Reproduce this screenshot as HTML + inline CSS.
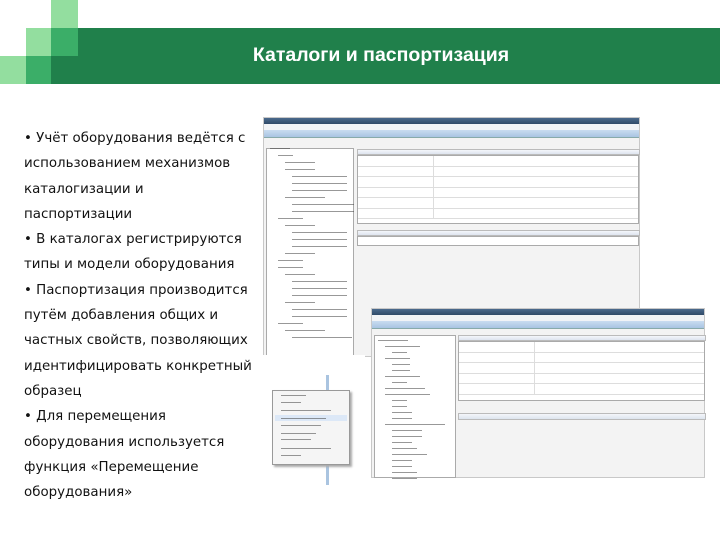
<!DOCTYPE html>
<html><head><meta charset="utf-8">
<style>
*{margin:0;padding:0;box-sizing:border-box}
body{width:720px;height:540px;background:#fff;position:relative;overflow:hidden;font-family:"Liberation Sans",sans-serif}
.a{position:absolute}
.txt{left:24px;top:126px;line-height:25.3px;color:#111;font-family:"DejaVu Sans","Liberation Sans",sans-serif;font-size:13.4px}
.win{background:#f3f3f3;border:1px solid #c8c8c8}
.tb{background:linear-gradient(#4b6a8c,#2f4a68)}
.menu{background:#f1f3f6;font-size:4px;color:#333}
.tabs{background:linear-gradient(#c9dcf0,#a9c4e2);border-bottom:1px solid #8aa}
.tree{background:#fff;border:1px solid #aaa}
.ln{position:absolute;height:1px;background:#444;opacity:.55}
.grid{background:#fff;border:1px solid #aaa}
.row{border-bottom:1px solid #ddd;height:10.5px;position:relative}
.row:before{content:"";position:absolute;left:75px;top:0;bottom:0;border-left:1px solid #ddd}
.hdr{background:linear-gradient(#f4f6fa,#dde4ee);border:1px solid #bbb}
</style></head><body>
<div class="a" style="left:51px;top:0;width:27px;height:28px;background:#93de9f"></div>
<div class="a" style="left:26px;top:28px;width:25px;height:28px;background:#93de9f"></div>
<div class="a" style="left:51px;top:28px;width:27px;height:28px;background:#3bae68"></div>
<div class="a" style="left:0;top:56px;width:26px;height:28px;background:#93de9f"></div>
<div class="a" style="left:26px;top:56px;width:25px;height:28px;background:#3bae68"></div>
<div class="a" style="left:78px;top:28px;width:642px;height:56px;background:#20804b"></div>
<div class="a" style="left:51px;top:56px;width:27px;height:28px;background:#20804b"></div>
<div class="a" style="left:40px;top:44px;width:682px;text-align:center;color:#fff;font-weight:bold;font-size:19.5px">Каталоги и паспортизация</div>

<div class="a txt">• Учёт оборудования ведётся с<br>использованием механизмов<br>каталогизации и<br>паспортизации<br>• В каталогах регистрируются<br>типы и модели оборудования<br>• Паспортизация производится<br>путём добавления общих и<br>частных свойств, позволяющих<br>идентифицировать конкретный<br>образец<br>• Для перемещения<br>оборудования используется<br>функция «Перемещение<br>оборудования»</div>

<!-- window 1 -->
<div class="a win" style="left:263px;top:117px;width:377px;height:240px">
 <div class="tb" style="height:6px"></div>
 <div class="menu" style="height:6px"></div>
 <div class="tabs" style="height:8px"></div>
 <div class="a tree" style="left:2px;top:30px;width:88px;height:210px"></div>
 <div class="a hdr" style="left:93px;top:31px;width:283px;height:6px"></div>
 <div class="a grid" style="left:93px;top:37px;width:282px;height:69px">
  <div class="row"></div><div class="row"></div><div class="row"></div><div class="row"></div><div class="row"></div><div class="row"></div>
 </div>
 <div class="a hdr" style="left:93px;top:112px;width:283px;height:6px"></div>
 <div class="a grid" style="left:93px;top:118px;width:282px;height:10px"></div>
</div>
<div class="a" style="left:270px;top:148px;width:85px">
 <div class="ln" style="left:0;top:0;width:20px"></div>
 <div class="ln" style="left:8px;top:7px;width:15px"></div>
 <div class="ln" style="left:15px;top:14px;width:30px"></div>
 <div class="ln" style="left:15px;top:21px;width:30px"></div>
 <div class="ln" style="left:22px;top:28px;width:55px"></div>
 <div class="ln" style="left:22px;top:35px;width:55px"></div>
 <div class="ln" style="left:22px;top:42px;width:55px"></div>
 <div class="ln" style="left:15px;top:49px;width:40px"></div>
 <div class="ln" style="left:22px;top:56px;width:62px"></div>
 <div class="ln" style="left:22px;top:63px;width:62px"></div>
 <div class="ln" style="left:8px;top:70px;width:25px"></div>
 <div class="ln" style="left:15px;top:77px;width:30px"></div>
 <div class="ln" style="left:22px;top:84px;width:55px"></div>
 <div class="ln" style="left:22px;top:91px;width:55px"></div>
 <div class="ln" style="left:22px;top:98px;width:55px"></div>
 <div class="ln" style="left:15px;top:105px;width:30px"></div>
 <div class="ln" style="left:8px;top:112px;width:25px"></div>
 <div class="ln" style="left:8px;top:119px;width:25px"></div>
 <div class="ln" style="left:15px;top:126px;width:30px"></div>
 <div class="ln" style="left:22px;top:133px;width:55px"></div>
 <div class="ln" style="left:22px;top:140px;width:55px"></div>
 <div class="ln" style="left:22px;top:147px;width:55px"></div>
 <div class="ln" style="left:15px;top:154px;width:30px"></div>
 <div class="ln" style="left:22px;top:161px;width:55px"></div>
 <div class="ln" style="left:22px;top:168px;width:55px"></div>
 <div class="ln" style="left:8px;top:175px;width:25px"></div>
 <div class="ln" style="left:15px;top:182px;width:40px"></div>
 <div class="ln" style="left:22px;top:189px;width:60px"></div>
</div>

<div class="a" style="left:255px;top:355px;width:110px;height:130px;background:#fff"></div>
<div class="a" style="left:326px;top:375px;width:3px;height:110px;background:#aac4e0"></div>
<div class="a" style="left:272px;top:390px;width:78px;height:75px;background:#f5f5f5;border:1px solid #999;box-shadow:2px 2px 2px #aaa">
 <div class="ln" style="left:8px;top:4px;width:25px"></div>
 <div class="ln" style="left:8px;top:11px;width:20px"></div>
 <div class="ln" style="left:8px;top:19px;width:50px"></div>
 <div style="position:absolute;left:2px;top:24px;width:72px;height:6px;background:#dce8f7"></div>
 <div class="ln" style="left:8px;top:27px;width:45px"></div>
 <div class="ln" style="left:8px;top:34px;width:40px"></div>
 <div class="ln" style="left:8px;top:42px;width:35px"></div>
 <div class="ln" style="left:8px;top:48px;width:30px"></div>
 <div class="ln" style="left:8px;top:57px;width:50px"></div>
 <div class="ln" style="left:8px;top:64px;width:20px"></div>
</div>

<div class="a win" style="left:371px;top:308px;width:334px;height:170px">
 <div class="tb" style="height:6px"></div>
 <div class="menu" style="height:6px"></div>
 <div class="tabs" style="height:8px"></div>
 <div class="a tree" style="left:2px;top:26px;width:82px;height:143px"></div>
 <div class="a hdr" style="left:86px;top:26px;width:248px;height:6px"></div>
 <div class="a grid" style="left:86px;top:32px;width:247px;height:60px">
  <div class="row"></div><div class="row"></div><div class="row"></div><div class="row"></div><div class="row"></div>
 </div>
 <div class="a hdr" style="left:86px;top:104px;width:248px;height:7px"></div>
</div>
<div class="a" style="left:378px;top:340px;width:80px">
 <div class="ln" style="left:0;top:0;width:30px"></div>
 <div class="ln" style="left:7px;top:6px;width:35px"></div>
 <div class="ln" style="left:14px;top:12px;width:15px"></div>
 <div class="ln" style="left:7px;top:18px;width:25px"></div>
 <div class="ln" style="left:14px;top:24px;width:18px"></div>
 <div class="ln" style="left:14px;top:30px;width:18px"></div>
 <div class="ln" style="left:7px;top:36px;width:35px"></div>
 <div class="ln" style="left:14px;top:42px;width:15px"></div>
 <div class="ln" style="left:7px;top:48px;width:40px"></div>
 <div class="ln" style="left:7px;top:54px;width:45px"></div>
 <div class="ln" style="left:14px;top:60px;width:15px"></div>
 <div class="ln" style="left:14px;top:66px;width:15px"></div>
 <div class="ln" style="left:14px;top:72px;width:20px"></div>
 <div class="ln" style="left:14px;top:78px;width:20px"></div>
 <div class="ln" style="left:7px;top:84px;width:60px"></div>
 <div class="ln" style="left:14px;top:90px;width:30px"></div>
 <div class="ln" style="left:14px;top:96px;width:30px"></div>
 <div class="ln" style="left:14px;top:102px;width:20px"></div>
 <div class="ln" style="left:14px;top:108px;width:25px"></div>
 <div class="ln" style="left:14px;top:114px;width:35px"></div>
 <div class="ln" style="left:14px;top:120px;width:20px"></div>
 <div class="ln" style="left:14px;top:126px;width:20px"></div>
 <div class="ln" style="left:14px;top:132px;width:25px"></div>
 <div class="ln" style="left:14px;top:138px;width:25px"></div>
</div>
</body></html>
